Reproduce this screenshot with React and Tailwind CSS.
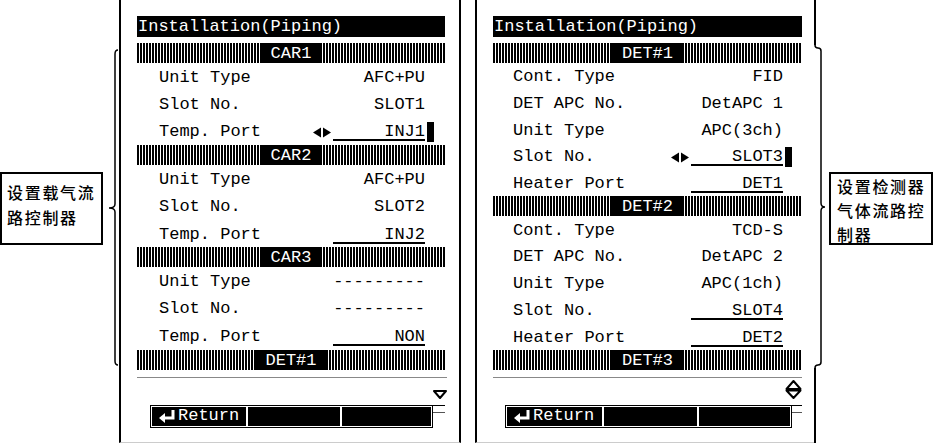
const mono = "font-['Liberation_Mono',monospace]";
const cjk = "font-['Noto_Sans_CJK_SC',sans-serif]";

function Arrows() {
  return (
    <svg width="19" height="11" viewBox="0 0 19 11" className="mr-[1px]">
      <polygon points="0,5.5 8,0.5 8,10.5" fill="#000" />
      <polygon points="10,0.5 18,5.5 10,10.5" fill="#000" />
    </svg>
  );
}

function ReturnIcon() {
  return (
    <svg width="18" height="14" viewBox="0 0 18 14" className="mr-[1px]">
      <path d="M14 1 V9 H5" stroke="#fff" strokeWidth="3" fill="none" />
      <polygon points="0,9 6,4 6,14" fill="#fff" />
    </svg>
  );
}

function Bar({ label }) {
  return (
    <div className="h-[20px] flex justify-center bg-[repeating-linear-gradient(90deg,#000_0_2px,#fff_2px_3px)]">
      <div className="bg-black text-white px-[10px] leading-[21px] text-[17px]">{label}</div>
    </div>
  );
}

function Row({ label, value, line, active, h, pl, pr }) {
  return (
    <div className={`flex items-center justify-between pt-[2px] ${h} ${pl} ${pr}`}>
      <span className="leading-[18px] whitespace-pre">{label}</span>
      <div className="flex items-center">
        {active && <Arrows />}
        <div className={`w-[92px] text-right whitespace-pre ${line ? 'border-b-2 border-black h-[19px] leading-[19px] mt-[-1px]' : 'h-[18px] leading-[18px]'}`}>
          {value}
        </div>
        <div className="w-[9px] h-[20px] flex justify-end">
          {active && <div className="w-[7px] h-[20px] bg-black" />}
        </div>
      </div>
    </div>
  );
}

function SoftKeys({ w1, w2, width }) {
  return (
    <div className={`h-[23px] border border-black p-px flex gap-[2px] bg-white ${width}`}>
      <div className={`bg-black flex items-center text-white pl-[7px] text-[17px] ${w1}`}>
        <ReturnIcon />
        <span className="leading-[20px]">Return</span>
      </div>
      <div className={`bg-black ${w2}`} />
      <div className="flex-1 bg-black" />
    </div>
  );
}

function Marks({ w }) {
  return (
    <div className={w}>
      <div className="h-px bg-black" />
      <div className="mt-[6px] h-px bg-[#555]" />
    </div>
  );
}

const carSections = [
  {
    name: 'CAR1',
    rows: [
      ['Unit Type', 'AFC+PU'],
      ['Slot No.', 'SLOT1'],
      ['Temp. Port', 'INJ1', true, true],
    ],
  },
  {
    name: 'CAR2',
    rows: [
      ['Unit Type', 'AFC+PU'],
      ['Slot No.', 'SLOT2'],
      ['Temp. Port', 'INJ2', true],
    ],
  },
  {
    name: 'CAR3',
    rows: [
      ['Unit Type', '---------'],
      ['Slot No.', '---------'],
      ['Temp. Port', 'NON', true],
    ],
  },
];

const detSections = [
  {
    name: 'DET#1',
    rows: [
      ['Cont. Type', 'FID'],
      ['DET APC No.', 'DetAPC 1'],
      ['Unit Type', 'APC(3ch)'],
      ['Slot No.', 'SLOT3', true, true],
      ['Heater Port', 'DET1', true],
    ],
  },
  {
    name: 'DET#2',
    rows: [
      ['Cont. Type', 'TCD-S'],
      ['DET APC No.', 'DetAPC 2'],
      ['Unit Type', 'APC(1ch)'],
      ['Slot No.', 'SLOT4', true],
      ['Heater Port', 'DET2', true],
    ],
  },
];

export default function App() {
  return (
    <div className={`w-[935px] h-[443px] bg-white flex overflow-hidden text-black ${mono} text-[17px]`}>
      {/* left callout */}
      <div className="w-[103px] shrink-0 pt-[172px]">
        <div className={`w-[103px] h-[73px] border-2 border-black pl-[5px] pt-[6px] text-[16px] font-medium tracking-[1.7px] leading-[25px] whitespace-nowrap ${cjk}`}>
          <div>设置载气流</div>
          <div>路控制器</div>
        </div>
      </div>
      <svg width="16" height="443" viewBox="0 0 16 443" className="shrink-0">
        <path d="M15 50 Q12 50 12 54 V204 Q12 208 6 208 Q12 208 12 212 V361 Q12 365 15 365" stroke="#000" strokeWidth="1.5" fill="none" />
      </svg>

      {/* left panel */}
      <div className="w-[342px] h-[443px] shrink-0 border-l-2 border-r-2 border-black border-b border-b-[#ccc] flex flex-col pl-[16px] pr-[14px]">
        <div className="mt-[16px] h-[21px] bg-black text-white pl-[1px] leading-[22px] mb-[6px]">Installation(Piping)</div>
        {carSections.map((s) => (
          <div key={s.name}>
            <Bar label={s.name} />
            {s.rows.map(([l, v, line, active]) => (
              <Row key={l} label={l} value={v} line={line} active={active} h="h-[27.4px]" pl="pl-[22px]" pr="pr-[11px]" />
            ))}
          </div>
        ))}
        <Bar label="DET#1" />
        <div className="mt-[7px] h-px w-[310px] bg-[#888]" />
        <div className="h-[27px] flex justify-end pt-[12px] mr-[-2px]">
          <svg width="14" height="9" viewBox="0 0 14 9">
            <polygon points="1,1 13,1 7,8" stroke="#000" strokeWidth="2" fill="none" strokeLinejoin="round" />
          </svg>
        </div>
        <div className="flex items-start ml-[13px]">
          <SoftKeys width="w-[285px]" w1="w-[94px]" w2="w-[92px]" />
          <Marks w="w-[12px]" />
        </div>
      </div>

      <div className="w-[14px] shrink-0" />

      {/* right panel */}
      <div className="w-[339px] h-[443px] shrink-0 border-l-2 border-black border-b border-b-[#ccc] flex flex-col pl-[16px] pr-[12px]">
        <div className="mt-[16px] h-[21px] bg-black text-white pl-[1px] leading-[22px] mb-[6px]">Installation(Piping)</div>
        {detSections.map((s) => (
          <div key={s.name}>
            <Bar label={s.name} />
            {s.rows.map(([l, v, line, active]) => (
              <Row key={l} label={l} value={v} line={line} active={active} h="h-[26.7px]" pl="pl-[20px]" pr="pr-[10px]" />
            ))}
          </div>
        ))}
        <Bar label="DET#3" />
        <div className="mt-[7px] h-px bg-[#888]" />
        <div className="h-[27px] flex justify-end pt-[1px]">
          <svg width="17" height="21" viewBox="0 0 17 21">
            <polygon points="1.5,10 8.5,2 15.5,10" stroke="#000" strokeWidth="2" fill="none" strokeLinejoin="round" />
            <polygon points="1.5,11.5 15.5,11.5 8.5,19" stroke="#000" strokeWidth="2" fill="none" strokeLinejoin="round" />
          </svg>
        </div>
        <div className="flex items-start ml-[12px]">
          <SoftKeys width="w-[287px]" w1="w-[95px]" w2="w-[93px]" />
          <Marks w="w-[10px]" />
        </div>
      </div>

      <svg width="15" height="443" viewBox="0 0 15 443" className="shrink-0">
        <path d="M1 0 V45 M1 368 V443" stroke="#000" strokeWidth="2" fill="none" />
        <path d="M1 45 Q1 48 4 48 Q7 48 7 51 V203 Q7 207 11 207 Q7 207 7 211 V362 Q7 365 4 365 Q1 365 1 368" stroke="#000" strokeWidth="1.5" fill="none" />
      </svg>

      {/* right callout */}
      <div className="w-[104px] shrink-0 pt-[172px]">
        <div className={`w-[104px] h-[73px] border-2 border-black pl-[6px] text-[16px] font-medium tracking-[1.7px] leading-[24px] whitespace-nowrap ${cjk}`}>
          <div>设置检测器</div>
          <div>气体流路控</div>
          <div>制器</div>
        </div>
      </div>
    </div>
  );
}
